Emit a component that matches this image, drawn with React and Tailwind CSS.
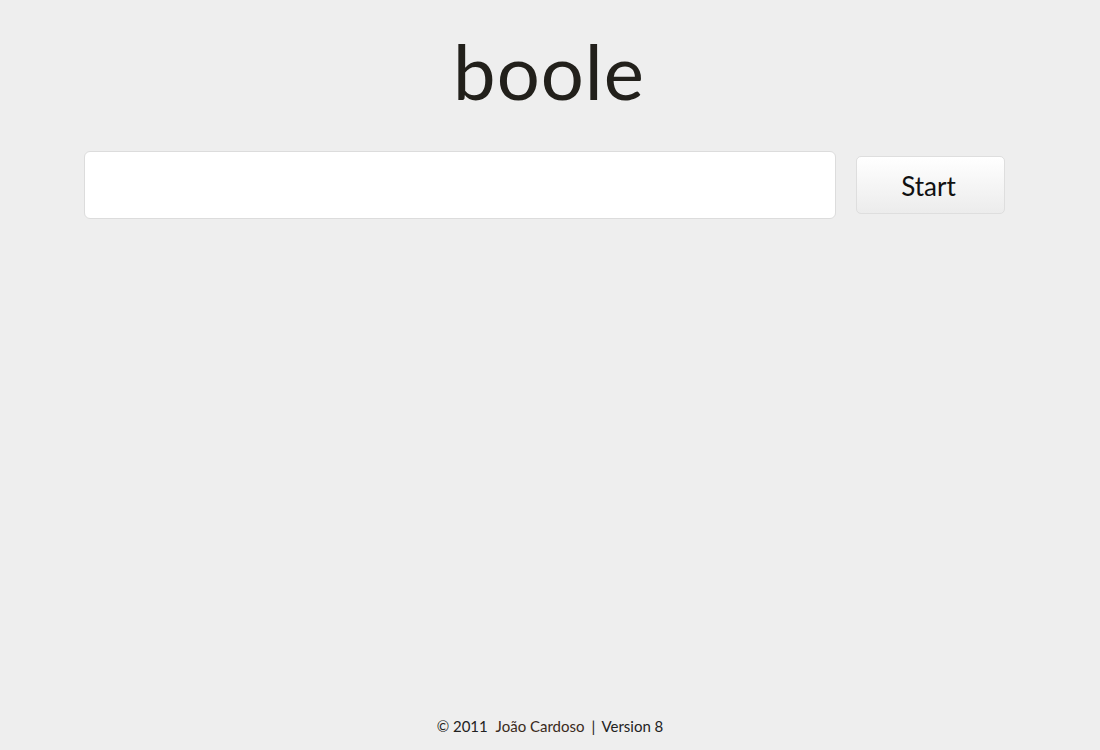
export default function App() {
  return (
    <div className="flex h-[750px] w-full flex-col bg-[#eeeeee] text-[#22201b]" style={{ fontFamily: '"Lato", "Open Sans", sans-serif' }}>
      <h1 className="mt-[21px] pr-[2px] text-center text-[76px] leading-[100px] font-normal tracking-[1px]">boole</h1>
      <div className="mt-[30px] flex items-center pl-[84px]">
        <input
          type="text"
          className="h-[68px] w-[752px] rounded-[6px] border border-[#dcdcdc] bg-white px-4 text-[24px] outline-none"
        />
        <button className="ml-[20px] h-[58px] w-[149px] rounded-[5px] border border-[#dedede] bg-gradient-to-b from-white to-[#ececec] pt-[3px] pr-[4px] text-[26px] text-[#111111]">
          Start
        </button>
      </div>
      <div className="flex-1" />
      <footer className="mb-[13px] text-center text-[15px] text-[#222222]">
        © 2011 <a className="ml-1 text-[#3a2a20]">João Cardoso</a> <span className="mx-[3px]">|</span> Version 8
      </footer>
    </div>
  );
}
